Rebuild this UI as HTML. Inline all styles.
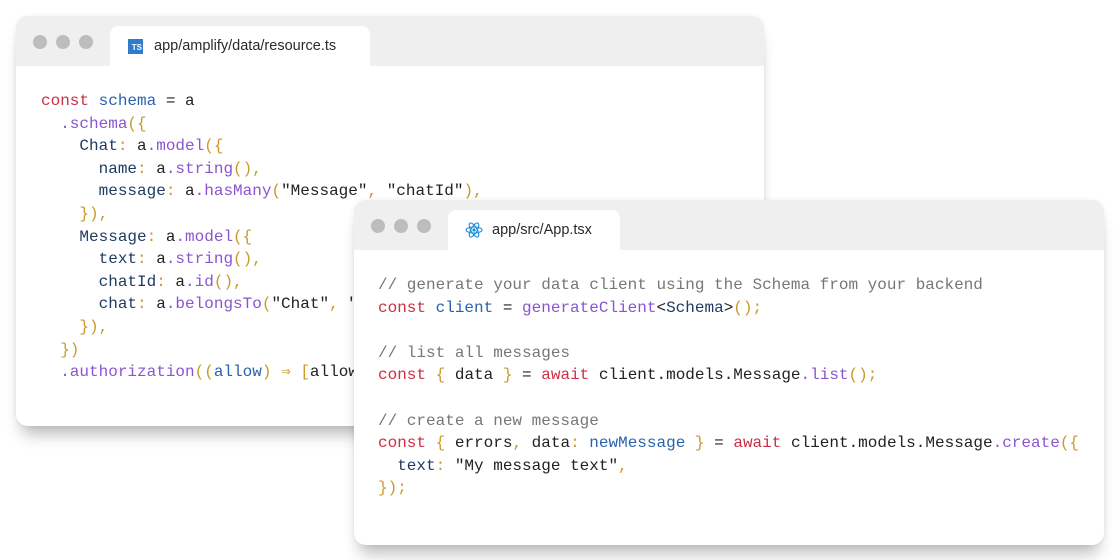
<!DOCTYPE html>
<html><head><meta charset="utf-8"><style>
body{margin:0;width:1120px;height:560px;background:#fff;position:relative;overflow:hidden;font-family:"Liberation Sans",sans-serif}
.win{position:absolute;background:#fff;border-radius:12px;overflow:hidden;box-shadow:0 14px 16px -6px rgba(0,0,0,.28),0 0 6px rgba(0,0,0,.06)}
.bar{position:absolute;left:0;top:0;right:0;height:50px;background:#efefef}
.dot{position:absolute;top:19px;width:14px;height:14px;border-radius:50%;background:#bdbdbd}
.tab{position:absolute;top:10px;height:40px;background:#fff;border-radius:8px 8px 0 0;font-size:14.5px;color:#2a2a2a;line-height:40px}
pre{position:absolute;margin:0;font-family:"Liberation Mono",monospace;font-size:16px;line-height:22.6px;color:#222}
.k{color:#cc2f45}.b{color:#2a62ac}.m{color:#8a55cf}.y{color:#c99a2a}.n{color:#1f3b63}.c{color:#777}
</style></head><body>
<div class="win" style="left:16px;top:16px;width:748px;height:410px">
<div class="bar"></div>
<div class="dot" style="left:17px"></div><div class="dot" style="left:40px"></div><div class="dot" style="left:63px"></div>
<div class="tab" style="left:94px;width:260px"><span style="position:absolute;left:18px;top:13px;width:15px;height:15px;background:#2f7ccc;color:#fff;font-size:8px;font-weight:bold;line-height:18px;text-align:right;padding-right:1px;box-sizing:border-box">TS</span><span style="position:absolute;left:44px">app/amplify/data/resource.ts</span></div>
<pre style="left:25px;top:74px"><span class="k">const</span> <span class="b">schema</span> = a
  <span class="m">.schema</span><span class="y">({</span>
    <span class="n">Chat</span><span class="y">:</span> a<span class="m">.model</span><span class="y">({</span>
      <span class="n">name</span><span class="y">:</span> a<span class="m">.string</span><span class="y">(),</span>
      <span class="n">message</span><span class="y">:</span> a<span class="m">.hasMany</span><span class="y">(</span>"Message"<span class="y">,</span> "chatId"<span class="y">),</span>
    <span class="y">}),</span>
    <span class="n">Message</span><span class="y">:</span> a<span class="m">.model</span><span class="y">({</span>
      <span class="n">text</span><span class="y">:</span> a<span class="m">.string</span><span class="y">(),</span>
      <span class="n">chatId</span><span class="y">:</span> a<span class="m">.id</span><span class="y">(),</span>
      <span class="n">chat</span><span class="y">:</span> a<span class="m">.belongsTo</span><span class="y">(</span>"Chat"<span class="y">,</span> "chatId"<span class="y">),</span>
    <span class="y">}),</span>
  <span class="y">})</span>
  <span class="m">.authorization</span><span class="y">((</span><span class="b">allow</span><span class="y">)</span> <span class="y">⇒</span> <span class="y">[</span>allow.guest()<span class="y">]);</span></pre>
</div>
<div class="win" style="left:354px;top:200px;width:750px;height:345px">
<div class="bar"></div>
<div class="dot" style="left:17px"></div><div class="dot" style="left:40px"></div><div class="dot" style="left:63px"></div>
<div class="tab" style="left:94px;width:172px"><svg style="position:absolute;left:17px;top:12px" width="18" height="16" viewBox="-11 -10 22 20"><g fill="none" stroke="#1d8fd8" stroke-width="1.4"><ellipse rx="10" ry="3.8"/><ellipse rx="10" ry="3.8" transform="rotate(60)"/><ellipse rx="10" ry="3.8" transform="rotate(120)"/></g><circle r="2" fill="#1d8fd8"/></svg><span style="position:absolute;left:44px">app/src/App.tsx</span></div>
<pre style="left:24px;top:74px"><span class="c">// generate your data client using the Schema from your backend</span>
<span class="k">const</span> <span class="b">client</span> = <span class="m">generateClient</span>&lt;<span class="n">Schema</span>&gt;<span class="y">();</span>

<span class="c">// list all messages</span>
<span class="k">const</span> <span class="y">{</span> data <span class="y">}</span> = <span class="k">await</span> client.models.Message<span class="m">.list</span><span class="y">();</span>

<span class="c">// create a new message</span>
<span class="k">const</span> <span class="y">{</span> errors<span class="y">,</span> data<span class="y">:</span> <span class="b">newMessage</span> <span class="y">}</span> = <span class="k">await</span> client.models.Message<span class="m">.create</span><span class="y">({</span>
  <span class="n">text</span><span class="y">:</span> "My message text"<span class="y">,</span>
<span class="y">});</span></pre>
</div>
</body></html>
